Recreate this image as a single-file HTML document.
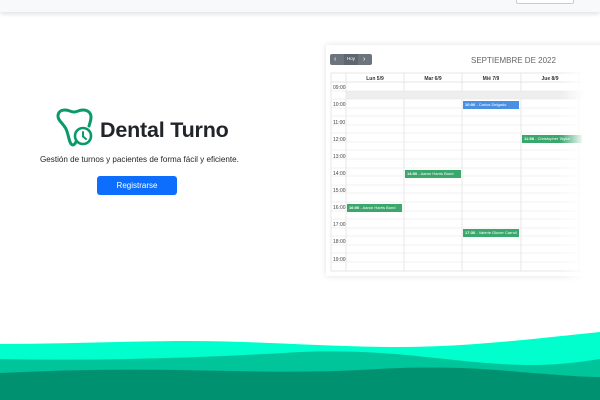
<!DOCTYPE html>
<html><head><meta charset="utf-8"><style>
*{margin:0;padding:0;box-sizing:border-box}
body{width:600px;height:400px;overflow:hidden;background:#fff;font-family:"Liberation Sans",sans-serif;position:relative}
.hdr{position:absolute;left:0;top:0;width:600px;height:12px;background:#f8f9fa;box-shadow:0 2px 5px rgba(0,0,0,.12)}
.hbtn{position:absolute;left:516px;top:-2px;width:58px;height:6px;border:1px solid #ccc;border-radius:2px;background:#fff}
.abs{position:absolute}
.card{position:absolute;left:326px;top:45px;width:300px;height:231px;background:#fff;box-shadow:0 0 6px rgba(0,0,0,.12)}
.fade{position:absolute;left:560px;top:70px;width:40px;height:215px;background:linear-gradient(90deg,rgba(255,255,255,0),#fff 60%)}
.ev{position:absolute;height:8px;color:#fff;font-size:4px;line-height:8px;padding-left:2px;white-space:nowrap;overflow:hidden}
.ev b{font-weight:bold}
</style></head><body>
<div class="hdr"><div class="hbtn"></div></div>

<svg class="abs" style="left:54px;top:108px" width="46" height="42" viewBox="0 0 46 42">
<path d="M25 29 C22 33 21 37 19 37 C15 37 15 27 12 21 C9 15 4 13 4 8 C4 4 7 2 11 2 C15 2 17 4 20 4 C23 4 25 2 29 2 C34 2 37 5 37 9 C37 12 36 15 35 18" fill="none" stroke="#0a9a6a" stroke-width="3" stroke-linecap="round" stroke-linejoin="round"/>
<circle cx="29" cy="28" r="8" fill="#fff" stroke="#0a9a6a" stroke-width="2.6"/>
<path d="M29 24 V28.5 L32 31" fill="none" stroke="#0a9a6a" stroke-width="2" stroke-linecap="round"/>
</svg>
<div class="abs" style="left:100px;top:118px;font-size:21.5px;font-weight:bold;color:#212529;letter-spacing:-.2px">Dental Turno</div>
<div class="abs" style="left:40px;top:155px;font-size:8.1px;color:#212529">Gestión de turnos y pacientes de forma fácil y eficiente.</div>
<div class="abs" style="left:97px;top:176px;width:80px;height:19px;background:#0d6efd;border-radius:3px;color:#fff;font-size:8px;text-align:center;line-height:19px">Registrarse</div>

<div class="card"></div>
<div class="abs" style="left:330px;top:54px;width:42px;height:11px;background:#6c757d;border-radius:2px"></div>
<div class="abs" style="left:334px;top:54px;font-size:7px;color:#fff;line-height:11px">‹</div>
<div class="abs" style="left:344px;top:54px;width:14px;height:11px;background:#5f666d;font-size:4.5px;color:#fff;line-height:10px;text-align:center">Hoy</div>
<div class="abs" style="left:363px;top:54px;font-size:7px;color:#fff;line-height:11px">›</div>
<div class="abs" style="left:471px;top:56px;font-size:8px;color:#666">SEPTIEMBRE DE 2022</div>

<svg class="abs" style="left:0;top:0" width="600" height="400">
<g stroke="#ddd" stroke-width="0.7" fill="none">
<rect x="331" y="73" width="270" height="198"/>
<line x1="331" y1="82" x2="600" y2="82"/>
<line x1="346" y1="73" x2="346" y2="271"/>
<line x1="404" y1="73" x2="404" y2="271"/>
<line x1="462" y1="73" x2="462" y2="271"/>
<line x1="521" y1="73" x2="521" y2="271"/>
<line x1="579" y1="73" x2="579" y2="271"/>
</g>
<rect x="346" y="91" width="254" height="8" fill="#eee"/>
<g stroke="#e6e6e6" stroke-width="0.6">
<line x1="331" y1="91" x2="600" y2="91"/><line x1="331" y1="99" x2="600" y2="99"/>
<line x1="331" y1="108" x2="600" y2="108"/><line x1="331" y1="116" x2="600" y2="116"/>
<line x1="331" y1="125" x2="600" y2="125"/><line x1="331" y1="133" x2="600" y2="133"/>
<line x1="331" y1="142" x2="600" y2="142"/><line x1="331" y1="150" x2="600" y2="150"/>
<line x1="331" y1="159" x2="600" y2="159"/><line x1="331" y1="168" x2="600" y2="168"/>
<line x1="331" y1="176" x2="600" y2="176"/><line x1="331" y1="185" x2="600" y2="185"/>
<line x1="331" y1="193" x2="600" y2="193"/><line x1="331" y1="202" x2="600" y2="202"/>
<line x1="331" y1="211" x2="600" y2="211"/><line x1="331" y1="219" x2="600" y2="219"/>
<line x1="331" y1="228" x2="600" y2="228"/><line x1="331" y1="236" x2="600" y2="236"/>
<line x1="331" y1="245" x2="600" y2="245"/><line x1="331" y1="253" x2="600" y2="253"/>
<line x1="331" y1="262" x2="600" y2="262"/>
</g>
<g font-size="5" fill="#333" font-family="Liberation Sans" font-weight="bold" text-anchor="middle">
<text x="375" y="80">Lun 5/9</text><text x="433" y="80">Mar 6/9</text><text x="491" y="80">Mié 7/9</text><text x="550" y="80">Jue 8/9</text>
</g>
<g font-size="5" fill="#444" font-family="Liberation Sans">
<text x="333" y="89">09:00</text><text x="333" y="106">10:00</text><text x="333" y="124">11:00</text><text x="333" y="141">12:00</text><text x="333" y="158">13:00</text><text x="333" y="175">14:00</text><text x="333" y="192">15:00</text><text x="333" y="209">16:00</text><text x="333" y="226">17:00</text><text x="333" y="243">18:00</text><text x="333" y="261">19:00</text>
</g>
</svg>
<div class="ev" style="left:463px;top:101px;width:56px;background:#4a90e2"><b>10:00</b> - Carlos Delgado</div>
<div class="ev" style="left:522px;top:135px;width:60px;background:#3aa76d"><b>11:58</b> - Christopher Taylor</div>
<div class="ev" style="left:405px;top:170px;width:56px;background:#3aa76d"><b>14:00</b> - Aaron Harris Bond</div>
<div class="ev" style="left:347px;top:204px;width:55px;background:#3aa76d"><b>16:00</b> - Aaron Harris Bond</div>
<div class="ev" style="left:463px;top:229px;width:56px;background:#3aa76d"><b>17:30</b> - Valerie Glover Carroll</div>
<div class="fade"></div>

<svg class="abs" style="left:0;top:320px" width="600" height="80" viewBox="0 0 600 80">
<path d="M0 24 C60 24 130 21 190 21 C260 21 330 27 400 27 C470 27 540 18 600 12 V80 H0Z" fill="#00ffcc"/>
<path d="M0 39 C100 41 200 38 300 32 C400 28 450 44 530 45 C560 45 580 42 600 39 V80 H0Z" fill="#00c49a"/>
<path d="M0 53 C60 50 120 49 180 50 C240 51 300 53 360 50 C420 46 470 47 520 52 C560 55 580 57 600 57 V80 H0Z" fill="#009270"/>
</svg>
</body></html>
